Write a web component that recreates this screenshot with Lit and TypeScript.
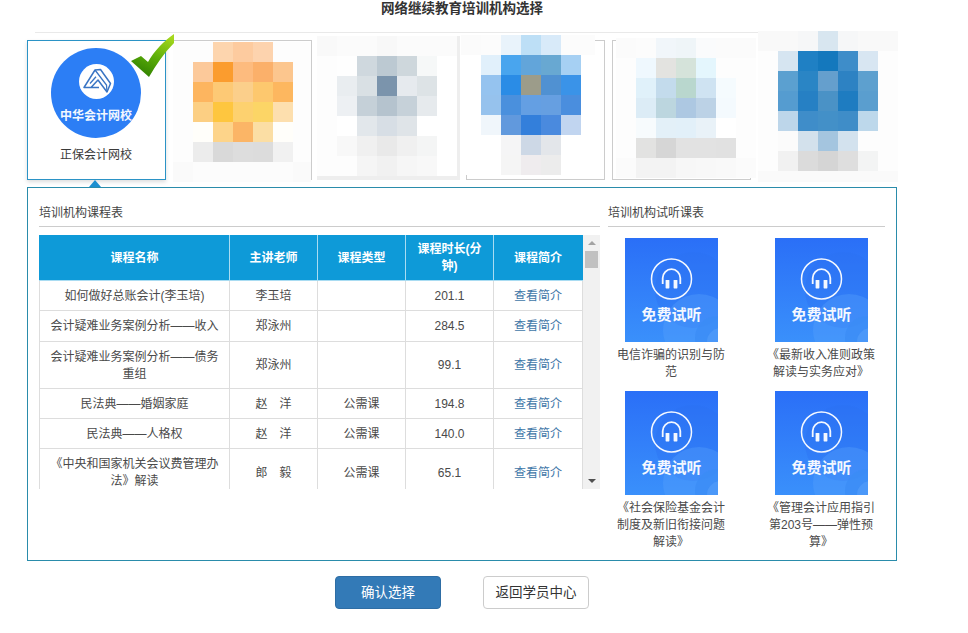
import { LitElement, html, css, svg } from "lit";
import { customElement } from "lit/decorators.js";

// blurred logos, one colour list per row of 20px cells
const mosaics = [
  {
    x: -1, y: 1, w: 138, h: 140, bg: "#fdfdfd",
    rows: [
      "fdfdfd fdfdfd fdd5ae fdcb9f fdd3ae fdfdfd fdfdfd",
      "fdfdfd fcc99a fb9c2e fdbb7e fbb06a fcc68e fdfdfd",
      "fdfdfd fdb55f fdc975 fbcf8b fdc86e fdb75f fdfdfd",
      "fdfdfd fccf83 fec63f fdd16f fcd566 fddfae fdfdfd",
      "fdfdfd fffefa fdd48a fbb566 fbdea4 fffefa fdfdfd",
      "fdfdfd ececec d9d9d9 dddddd dcdcdc f1f1f1 fdfdfd",
      "fafafa fcfcfc fcfcfc fcfcfc fcfcfc fcfcfc fafafa",
    ],
  },
  {
    x: -3, y: -5, w: 143, h: 144, bg: "#eeeeee",
    rows: [
      "f9f9f9 fbfbfb fbfbfb f8f8f8 fbfbfb fbfbfb fbfbfb",
      "fdfdfd fefefe cfd8de bcc9d2 ced7dc f6f8f8 ffffff",
      "fdfdfd e9edf0 d9e0e4 7b94ac e6eaee dde3e6 ffffff",
      "fdfdfd edf0f3 c5d0d8 b5c3ce c6d1d9 e6eaed ffffff",
      "fdfdfd ffffff e2e7eb d7dee5 dfe4e8 ffffff ffffff",
      "fdfdfd f8f8f8 f0f0f0 e9e9e9 f0f0f0 f4f5f5 ffffff",
      "fdfdfd fdfdfd f5f5f5 f1f1f1 f6f6f6 f8f8f8 ffffff",
    ],
  },
  {
    x: -5.5, y: -6, w: 134, h: 140, bg: "#ffffff",
    rows: [
      "fbfbfb fcfcfc e9f3fb bddff6 d8eaf9 fcfcfc fcfcfc",
      "ffffff e1f0fb 49a5ee 62a5da 68a8d2 a6d0f3 ffffff",
      "ffffff 95c3ef 2a8ce6 9c9c8a 5091d2 3a93e8 ffffff",
      "ffffff 96c2ed 4a90dd 649fe3 669fe1 4a8ede ffffff",
      "ffffff f0f6fb 6199dd 337fdb 4a8ade c1d5f0 ffffff",
      "ffffff ffffff f5f5f6 cdd8e6 e3e6ea ffffff ffffff",
      "ffffff ffffff f5f5f5 efecee ececec ffffff ffffff",
    ],
  },
  {
    x: 3, y: -3, w: 140, h: 140, bg: "#fdfdfd",
    rows: [
      "fbfbfb fcfcfc f1f6fa eff5f8 fafbfc fbfbfb fbfbfb",
      "fdfdfd eff8fe e3e3e0 d5e3da e4f6fd fdfdfd fdfdfd",
      "fdfdfd e0f1fa c3dbec b9d7ce cfe3f2 f5fbfe fdfdfd",
      "fdfdfd dcecf6 bcd6df adc8e2 bcd2e6 f4fafe fdfdfd",
      "fdfdfd f7fbfd e3f0f8 e2f0f9 e9f2f8 ffffff fdfdfd",
      "fdfdfd e2e2e1 d6d6d6 e2e2e2 e2e2e2 e1e1e1 fdfdfd",
      "fbfbfb f3f3f3 f3f3f3 f7f7f7 f8f8f8 f9f9f9 fbfbfb",
    ],
  },
  {
    x: -1, y: -10, w: 140, h: 151, bg: "#fafafa",
    rows: [
      "f9f9f9 f9f9f9 f6f7f8 d8e6f0 f6f7f8 f9f9f9 f9f9f9",
      "fdfdfd d6e5f1 1f80c4 1478bd 3e8dc9 d8e6f2 fdfdfd",
      "fdfdfd 5ba0d0 2a85c5 659fcd 2d82c3 5da0cf fdfdfd",
      "fdfdfd 559cd0 2680c4 4a92c6 1e7cc1 5a9ecf fdfdfd",
      "fdfdfd bdd6ea 3f8dc9 4390c8 3f8dc8 bdd8eb fdfdfd",
      "fdfdfd fbfbfb d3e1ec a4c5df d3e2ee fdfdfd fdfdfd",
      "fdfdfd f1f1f1 dbdbdb d5d5d5 dedede f3f4f4 fdfdfd",
      "fafafa fafafa fafafa fafafa fafafa fafafa fafafa",
    ],
  },
];

const courses = [
  ["如何做好总账会计(李玉培)", "李玉培", "", "201.1"],
  ["会计疑难业务案例分析——收入", "郑泳州", "", "284.5"],
  ["会计疑难业务案例分析——债务重组", "郑泳州", "", "99.1"],
  ["民法典——婚姻家庭", "赵　洋", "公需课", "194.8"],
  ["民法典——人格权", "赵　洋", "公需课", "140.0"],
  ["《中央和国家机关会议费管理办法》解读", "郎　毅", "公需课", "65.1"],
];

const trials = [
  "电信诈骗的识别与防范",
  "《最新收入准则政策解读与实务应对》",
  "《社会保险基金会计制度及新旧衔接问题解读》",
  "《管理会计应用指引第203号——弹性预算》",
];

@customElement("app-root")
export class AppRoot extends LitElement {
  static styles = css`
    :host {
      display: block;
      width: 968px;
      height: 633px;
      background: #fff;
      font-family: "Liberation Sans", "Noto Sans CJK SC", sans-serif;
      font-size: 12px;
      line-height: 17.14px;
      color: #4a4a4a;
    }
    .page {
      width: 870px;
      margin-left: 27px;
    }
    .title {
      margin: 0 0 0 8px;
      border-bottom: 1px solid #e9e9e9;
      padding-top: 1px;
      box-sizing: border-box;
      height: 33px;
      font-size: 13.5px;
      font-weight: bold;
      line-height: 16px;
      text-align: center;
      color: #333;
      text-indent: -8px;
    }
    .cards {
      display: grid;
      grid-template-columns: repeat(6, 1fr);
      column-gap: 7px;
      margin-top: 7px;
    }
    .card {
      position: relative;
      height: 140px;
      box-sizing: border-box;
      border: 1px solid #ccc;
    }
    .mosaic {
      position: absolute;
      display: block;
    }
    .card.active {
      z-index: 2;
      display: flex;
      flex-direction: column;
      align-items: center;
      border-color: #2b93c6;
      background: #fff;
      box-shadow: 0 2px 4px rgba(0, 0, 0, 0.14);
    }
    .logo {
      display: flex;
      flex-direction: column;
      align-items: center;
      width: 90px;
      height: 90px;
      margin: 7px 1px 0 0;
      border-radius: 50%;
      background: #2c7ef5;
    }
    .logo svg {
      display: block;
      margin-top: 16px;
    }
    .logo span {
      margin-top: 9px;
      font-size: 12px;
      font-weight: bold;
      line-height: 17px;
      color: #f2f7ff;
      white-space: nowrap;
    }
    .name {
      margin: 9px 1px 0 0;
      line-height: 17px;
      color: #3a3a3a;
    }
    .check {
      position: absolute;
      left: 102px;
      top: -8px;
    }
    .arrow {
      position: absolute;
      left: 61px;
      top: 139px;
      border: 6px solid transparent;
      border-top: 0;
      border-bottom: 7px solid #1c8fd0;
    }
    .panel {
      display: flex;
      gap: 8px;
      height: 374px;
      margin-top: 7px;
      padding: 17px 11px 0;
      box-sizing: border-box;
      border: 1px solid #2a8cab;
    }
    .left {
      width: 561px;
    }
    .right {
      width: 277px;
    }
    .heading {
      padding-bottom: 4px;
      border-bottom: 1px solid #ccc;
      line-height: 17px;
      color: #444;
    }
    .scroller {
      display: flex;
      height: 254px;
      margin-top: 8px;
    }
    .clip {
      width: 544px;
      overflow: hidden;
    }
    table {
      width: 543px;
      table-layout: fixed;
      border-collapse: collapse;
    }
    th,
    td {
      padding: 7px 6px 5px;
      text-align: center;
      vertical-align: middle;
      border: 1px solid #ddd;
    }
    th {
      padding: 5px 6px;
      border-color: #a9dcf2;
      border-top-color: #0e9ad8;
      background: #0e9ad8;
      color: #fff;
      font-weight: bold;
    }
    th:first-child {
      border-left-color: #0e9ad8;
    }
    th:last-child {
      border-right-color: #0e9ad8;
    }
    td a {
      color: #3f77a8;
      text-decoration: none;
    }
    .bar {
      display: flex;
      flex-direction: column;
      justify-content: space-between;
      align-items: center;
      width: 17px;
      background: #f1f1f1;
      position: relative;
    }
    .bar i {
      display: block;
      margin: 6px 0;
      border: 4px solid transparent;
    }
    .bar .up {
      border-top: 0;
      border-bottom: 4px solid #a3a3a3;
    }
    .bar .down {
      border-bottom: 0;
      border-top: 4px solid #505050;
    }
    .thumb {
      position: absolute;
      left: 2px;
      top: 16px;
      width: 13px;
      height: 17px;
      background: #c1c1c1;
    }
    .trials {
      display: grid;
      grid-template-columns: repeat(2, 110px);
      column-gap: 40px;
      grid-auto-rows: 153px;
      margin: 11px 0 0 8px;
    }
    .trial {
      display: flex;
      flex-direction: column;
      align-items: center;
    }
    .trial svg {
      display: block;
      flex: none;
    }
    .trial text {
      font-size: 15px;
      font-weight: bold;
      fill: #f4f8ff;
    }
    .trial p {
      margin: 5px 0 0;
      width: 110px;
      text-align: center;
      line-height: 17px;
      color: #4a4a4a;
    }
    .actions {
      display: flex;
      justify-content: center;
      gap: 42px;
      margin-top: 15px;
    }
    .btn {
      width: 106px;
      height: 33px;
      box-sizing: border-box;
      border: 1px solid #ccc;
      border-radius: 4px;
      background: #fff;
      color: #333;
      font: inherit;
      font-size: 13.5px;
      padding: 0;
    }
    .btn.primary {
      border-color: #2e6da4;
      background: #337ab7;
      color: #fff;
    }
  `;

  private renderMosaic(m: (typeof mosaics)[number]) {
    return html`
      <svg
        class="mosaic"
        width=${m.w}
        height=${m.h}
        viewBox="0 0 ${m.w} ${m.h}"
        shape-rendering="crispEdges"
        style="left:${m.x}px;top:${m.y}px;background:${m.bg}"
      >
        ${m.rows.map((row, r) =>
          row
            .split(" ")
            .map(
              (c, i) =>
                svg`<rect x=${i * 20} y=${r * 20} width="20" height="20" fill="#${c}"/>`
            )
        )}
      </svg>
    `;
  }

  private renderThumb(id: number) {
    return html`
      <svg width="93" height="104" viewBox="0 0 93 104">
        <defs>
          <linearGradient id="tg${id}" x1="0" y1="0" x2="0" y2="1">
            <stop offset="0" stop-color="#2a6ff7" />
            <stop offset="1" stop-color="#3a90fb" />
          </linearGradient>
          <clipPath id="tc${id}"><rect width="93" height="104" /></clipPath>
        </defs>
        <rect width="93" height="104" fill="url(#tg${id})" />
        <g clip-path="url(#tc${id})">
          <circle cx="68" cy="52" r="38" fill="#2a6ff0" fill-opacity="0.35" />
          <circle cx="74" cy="92" r="36" fill="#5aa2fc" fill-opacity="0.35" />
          <circle cx="92" cy="100" r="22" fill="#3a8cf5" fill-opacity="0.7" />
          <circle cx="96" cy="104" r="14" fill="#5aa2fc" fill-opacity="0.5" />
        </g>
        <circle cx="46.5" cy="41" r="20" fill="none" stroke="#f4f8ff" stroke-width="1.5" />
        <path
          d="M37.7 46V40a8.8 8.8 0 0 1 17.6 0V46"
          fill="none"
          stroke="#f4f8ff"
          stroke-width="1.8"
        />
        <rect x="40.6" y="42" width="3.8" height="8.4" rx="0.6" fill="#f4f8ff" />
        <rect x="48.6" y="42" width="3.8" height="8.4" rx="0.6" fill="#f4f8ff" />
        <text x="46.5" y="82" text-anchor="middle">免费试听</text>
      </svg>
    `;
  }

  render() {
    return html`
      <div class="page">
        <div class="title">网络继续教育培训机构选择</div>

        <div class="cards">
          <div class="card active">
            <div class="logo">
              <svg width="35" height="35" viewBox="0 0 35 35">
                <circle cx="17.5" cy="17.5" r="17.5" fill="#fff" />
                <path
                  d="M20 23.5H5L16 6L21.5 5.5L31.5 19.5L28 28L19 16L12 23.5"
                  fill="none"
                  stroke="#3a75c4"
                  stroke-width="1.5"
                  stroke-linejoin="round"
                />
                <path
                  d="M16 6L27.5 21L28 28M11 19.5L17 12.7"
                  fill="none"
                  stroke="#3a75c4"
                  stroke-width="1.3"
                />
              </svg>
              <span>中华会计网校</span>
            </div>
            <div class="name">正保会计网校</div>
            <svg class="check" width="46" height="46" viewBox="0 0 46 46">
              <defs>
                <linearGradient id="cg" x1="0.8" y1="0" x2="0.3" y2="1">
                  <stop offset="0" stop-color="#a6d81e" />
                  <stop offset="0.5" stop-color="#5fb00a" />
                  <stop offset="1" stop-color="#2f8000" />
                </linearGradient>
              </defs>
              <path
                d="M1 28 L11 23 L18 29 C24 18 34 8 44 1 L44 10 C34 20 26 32 19 44 Z"
                fill="url(#cg)"
              />
            </svg>
            <div class="arrow"></div>
          </div>
          ${mosaics.map((m) => html`<div class="card">${this.renderMosaic(m)}</div>`)}
        </div>

        <div class="panel">
          <div class="left">
            <div class="heading">培训机构课程表</div>
            <div class="scroller">
              <div class="clip">
                <table>
                  <colgroup>
                    <col style="width:190px" />
                    <col style="width:88px" />
                    <col style="width:88px" />
                    <col style="width:88px" />
                    <col style="width:89px" />
                  </colgroup>
                  <tr>
                    <th>课程名称</th>
                    <th>主讲老师</th>
                    <th>课程类型</th>
                    <th>课程时长(分钟)</th>
                    <th>课程简介</th>
                  </tr>
                  ${courses.map(
                    (c) => html`
                      <tr>
                        <td>${c[0]}</td>
                        <td>${c[1]}</td>
                        <td>${c[2]}</td>
                        <td>${c[3]}</td>
                        <td><a href="#">查看简介</a></td>
                      </tr>
                    `
                  )}
                </table>
              </div>
              <div class="bar">
                <i class="up"></i>
                <div class="thumb"></div>
                <i class="down"></i>
              </div>
            </div>
          </div>

          <div class="right">
            <div class="heading">培训机构试听课表</div>
            <div class="trials">
              ${trials.map(
                (t, i) => html`
                  <div class="trial">
                    ${this.renderThumb(i)}
                    <p>${t}</p>
                  </div>
                `
              )}
            </div>
          </div>
        </div>

        <div class="actions">
          <button class="btn primary">确认选择</button>
          <button class="btn">返回学员中心</button>
        </div>
      </div>
    `;
  }
}
